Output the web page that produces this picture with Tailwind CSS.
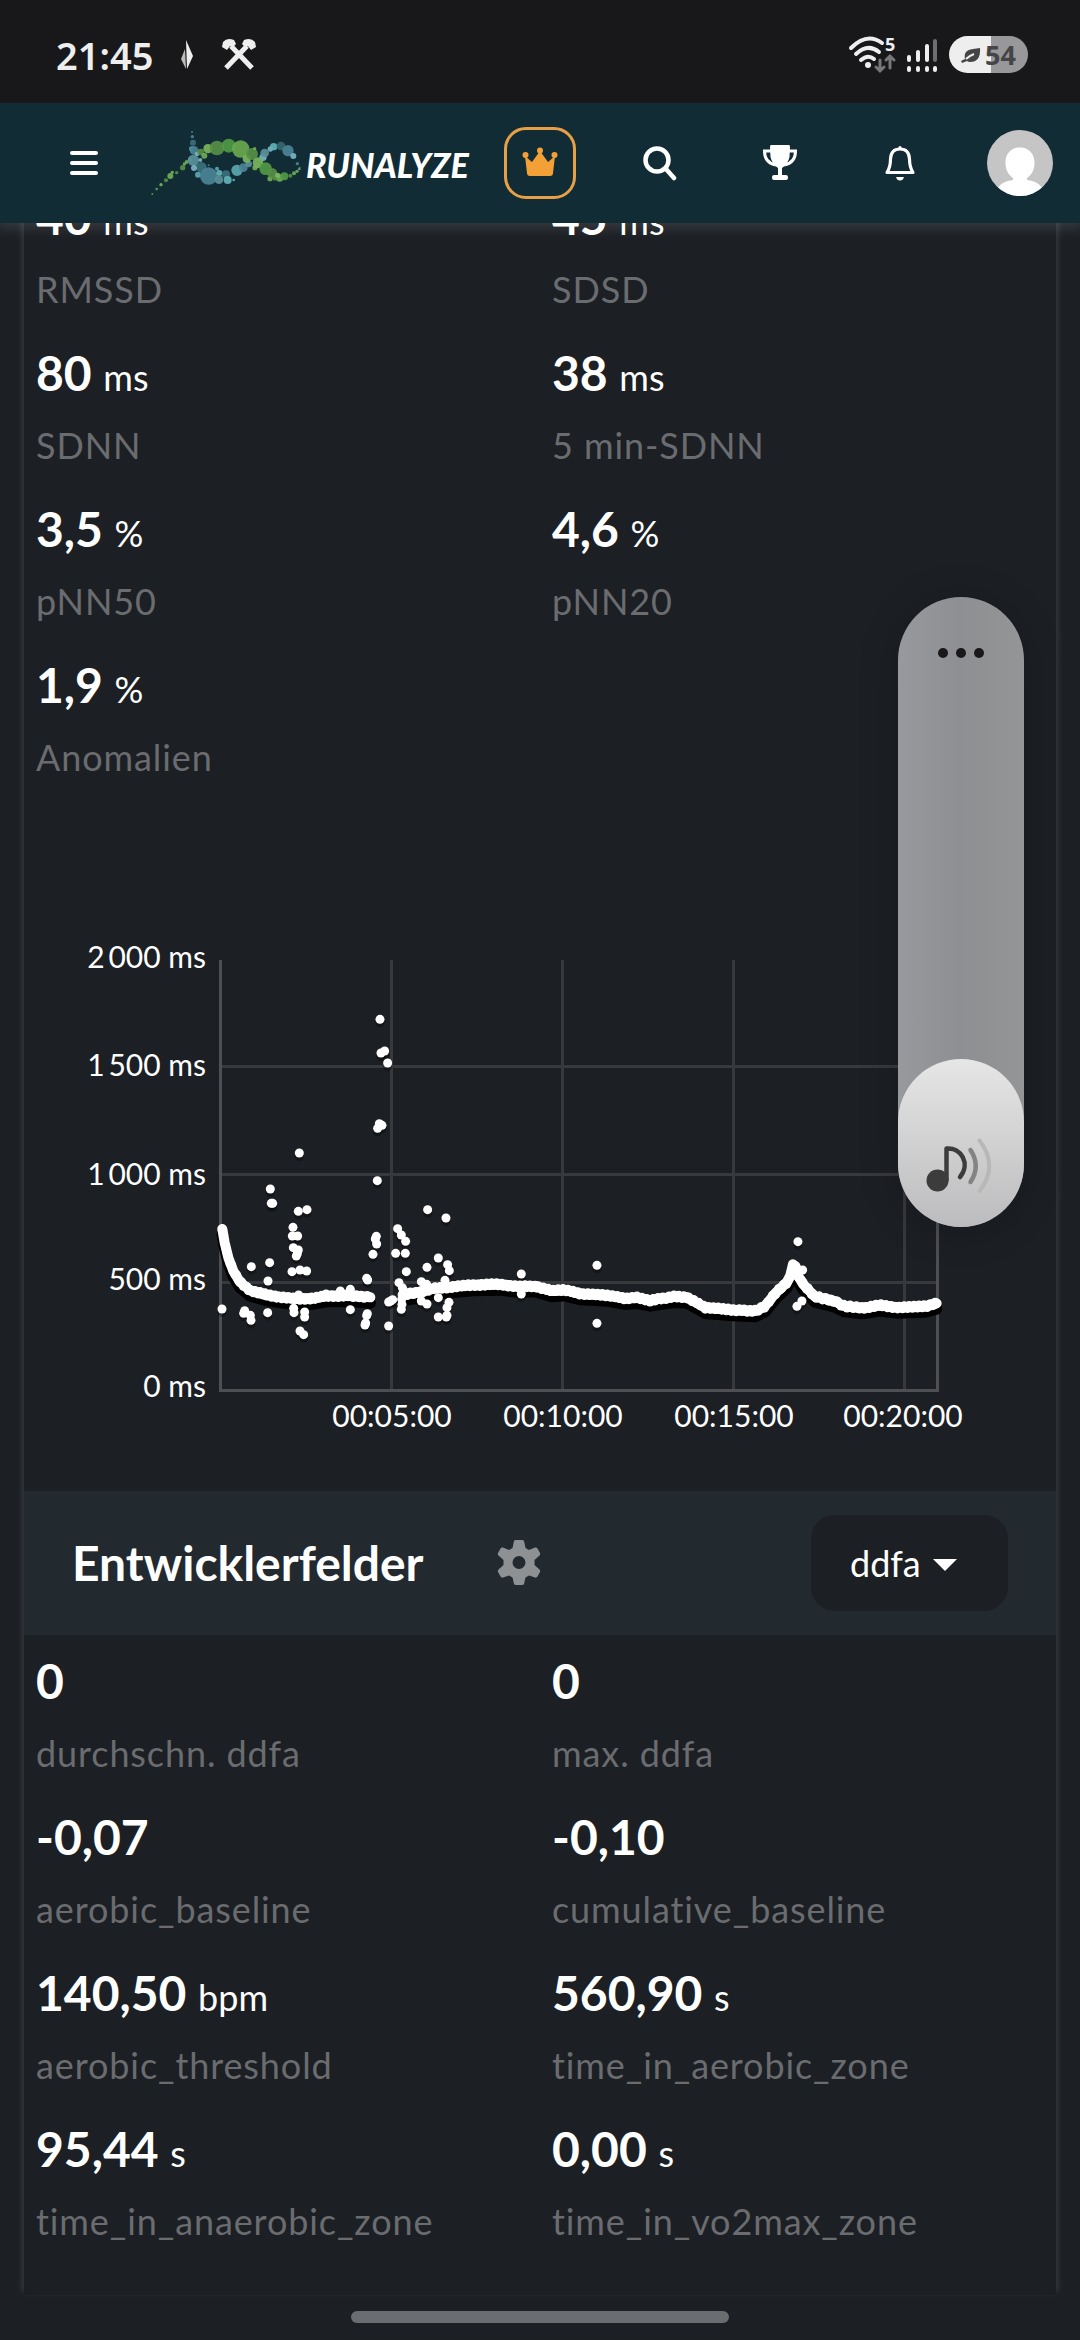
<html lang="de">
 <head>
  <meta charset="utf-8"/>
  <meta content="width=device-width, initial-scale=1.0" name="viewport"/>
  <title>
   RUNALYZE
  </title>
  <script src="https://cdn.jsdelivr.net/npm/@tailwindcss/browser@4"></script>
 </head>
 <body class="bg-[#1c1f24] text-white font-['Lato',sans-serif] overflow-x-hidden">
  <!-- status bar -->
  <div class="relative z-20 h-[103px] bg-[#18181a] flex items-center justify-between pl-14 pr-[52px] pt-[6px]">
   <div class="flex items-center gap-[26px] text-[#eee]">
    <span class="font-['Noto_Sans',sans-serif] font-semibold text-[38px] leading-none">21:45</span>
    <svg class="w-4 h-8" viewBox="0 0 16 32">
     <path d="M7 1 L14 17 L8 30 Z" fill="#eee"/>
     <path d="M6 10 L7 30 L2 20 Z" fill="#bbb"/>
    </svg>
    <svg class="w-9 h-9" viewBox="0 0 36 36" fill="none" stroke="#eee" stroke-width="5">
     <path d="M5 31 L26 9 M31 31 L10 9"/>
     <path d="M1 10 L2 5 Q6 0 13 3 L15 7 L12 10 L9 9 L6 13 Z M35 10 L34 5 Q30 0 23 3 L21 7 L24 10 L27 9 L30 13 Z" fill="#eee" stroke="none"/>
    </svg>
   </div>
   <div class="flex items-center gap-[11px]">
    <svg class="w-[48px] h-[38px] overflow-visible" viewBox="0 0 48 38" fill="none" stroke="#eee" stroke-width="4" stroke-linecap="round">
     <path d="M3 12 Q19 -4 34 7 M8 18 Q20 7 31 16 M13 24 Q20 18 26 23"/>
     <circle cx="20" cy="29" r="3" fill="#eee" stroke="none"/>
     <path d="M32 24 V34 M28 31 L32 35 L36 31 M42 32 V21 M38 24 L42 20 L46 24" stroke="#77777a" stroke-width="3"/>
     <text x="37" y="15" fill="#eee" stroke="none" class="font-['Noto_Sans',sans-serif] font-bold text-[18px]">5</text>
    </svg>
    <svg class="w-[31px] h-[36px]" viewBox="0 0 31 36" stroke="#eee" stroke-width="4" stroke-linecap="round">
     <path d="M2 20 V23 M11 15 V23 M20 9 V23 M2 31 V33 M11 31 V33 M20 31 V33 M28 31 V33"/>
     <path d="M28 4 V23" stroke="#6e6e70"/>
    </svg>
    <div class="w-[79px] h-[37px] rounded-full bg-linear-to-r from-[#eee] from-53% to-[#98989b] to-53% flex items-center justify-center text-[#454547]">
     <svg class="w-5 h-5" viewBox="0 0 20 20">
      <path d="M19 3 Q20 17 9 17 Q7 17 6 16 L1 18 L0 16 L4 14 Q2 5 12 4 Z" fill="#454547"/>
      <path d="M5 14 Q8 11 13 9" stroke="#eee" stroke-width="2" fill="none"/>
     </svg>
     <span class="font-['Noto_Sans',sans-serif] font-bold text-[27px] leading-none ml-1">54</span>
    </div>
   </div>
  </div>
  <!-- navigation -->
  <header class="relative z-10 h-[120px] bg-[#122c35] grid grid-cols-9 items-center shadow-[0_0_14px_4px_rgba(255,255,255,0.14)]">
   <button class="pl-12 flex justify-center" aria-label="Menü">
    <svg class="w-[30px] h-[30px]" viewBox="0 0 30 30" stroke="#fff" stroke-width="4" stroke-linecap="round">
     <path d="M3 5 H27 M3 15 H27 M3 25 H27"/>
    </svg>
   </button>
   <a href="#" class="col-span-3 pl-[30px] flex items-center gap-[2px]">
    <svg id="logo" class="w-[154px] h-[70px] shrink-0" viewBox="60 55 462 210"></svg>
    <span class="font-black italic text-[34px] leading-none pt-1">RUNALYZE</span>
   </a>
   <button class="size-[72px] border-3 border-[#e5a048] rounded-[22px] justify-self-center flex items-center justify-center" aria-label="Premium">
    <svg class="w-9 h-9" viewBox="0 0 36 36" fill="#f3a036">
     <path d="M3 11 L10 17 L18 6 L26 17 L33 11 L31 28 Q31 31 28 31 H8 Q5 31 5 28 Z"/>
     <circle cx="3.500" cy="10" r="3"/>
     <circle cx="18" cy="5.500" r="3"/>
     <circle cx="32.500" cy="10" r="3"/>
    </svg>
   </button>
   <button class="flex justify-center" aria-label="Suche">
    <svg class="w-9 h-9" viewBox="0 0 36 36" fill="none" stroke="#fff" stroke-width="4.500" stroke-linecap="round">
     <circle cx="15" cy="15" r="11.500"/>
     <path d="M24 24 L32 33"/>
    </svg>
   </button>
   <button class="flex justify-center" aria-label="Erfolge">
    <svg class="w-9 h-9" viewBox="0 0 36 36">
     <path d="M9 0 H27 Q28 0 28 2 L27.500 12 Q26 19 20 23 V30 H24 Q26 30 26 33 Q26 35 24 35 H12 Q10 35 10 33 Q10 30 12 30 H16 V23 Q10 19 8.500 12 L8 2 Q8 0 9 0 Z" fill="#fff"/>
     <path d="M9 6 H2.500 Q2.500 18 14 20 M27 6 H33.500 Q33.500 18 22 20" fill="none" stroke="#fff" stroke-width="3"/>
    </svg>
   </button>
   <button class="flex justify-center" aria-label="Benachrichtigungen">
    <svg class="w-9 h-9" viewBox="0 0 36 36" fill="none" stroke="#fff" stroke-width="3.200" stroke-linejoin="round" stroke-linecap="round">
     <path d="M18 4 Q9 4 8.500 14 Q8.500 22 5 27.500 H31 Q27.500 22 27.500 14 Q27 4 18 4 Z M18 2.500 V4"/>
     <path d="M14 32 H22 Q21 35.500 18 35.500 Q15 35.500 14 32 Z" fill="#fff" stroke="none"/>
    </svg>
   </button>
   <button class="flex justify-center" aria-label="Profil">
    <svg class="size-[66px]" viewBox="0 0 66 66">
     <clipPath id="round">
      <circle cx="33" cy="33" r="33"/>
     </clipPath>
     <g clip-path="url(#round)">
      <rect width="66" height="66" fill="#c5c5c5"/>
      <path d="M33 17.500 C42 17.500 48 24 47.500 34 C47 42 43 46 40 48 V50 C47 51 53 53 56 60 V66 H10 V60 C13 53 19 51 26 50 V48 C23 46 19 42 18.500 34 C18 24 24 17.500 33 17.500 Z" fill="#fff"/>
     </g>
    </svg>
   </button>
  </header>
  <main class="-mt-[44px] mx-6 shadow-[-5px_0_6px_-3px_rgba(255,255,255,0.12),5px_0_6px_-3px_rgba(255,255,255,0.12)] pb-7">
   <dl class="grid grid-cols-2" id="hrv"></dl>
   <svg class="w-full block" viewBox="24 802 1032 688">
    <g stroke="#37393d" stroke-width="3">
     <path d="M220 1065.500 H938 M220 1173.500 H938 M220 1281.500 H938 M391.500 959 V1389 M562.500 959 V1389 M733.500 959 V1389 M904.500 959 V1389"/>
     <path d="M220.500 959 V1389.500 H937.500 V959" fill="none" stroke="#4d4f53"/>
    </g>
    <g id="plot" transform="translate(200 1120) scale(0.3333)"></g>
    <g class="text-[30px]" fill="#fff" text-anchor="end">
     <text x="206" y="967">2&#8201;000 ms</text>
     <text x="206" y="1075">1&#8201;500 ms</text>
     <text x="206" y="1184">1&#8201;000 ms</text>
     <text x="206" y="1289">500 ms</text>
     <text x="206" y="1396">0 ms</text>
    </g>
    <g class="text-[30px]" fill="#fff" text-anchor="middle">
     <text x="392" y="1426">00:05:00</text>
     <text x="563" y="1426">00:10:00</text>
     <text x="734" y="1426">00:15:00</text>
     <text x="903" y="1426">00:20:00</text>
    </g>
   </svg>
   <div class="h-36 bg-[#22292f] flex items-center px-12 mb-2">
    <h2 class="font-bold text-[48px] leading-none">
     Entwicklerfelder
    </h2>
    <button class="ml-[72px]" aria-label="Einstellungen">
     <svg class="w-[46px] h-[46px]" viewBox="0 0 46 46" fill="#8d9194">
      <path fill-rule="evenodd" d="M18 1 Q18.500 0 20 0 H26 Q27.500 0 28 1 L29.500 8 L33 10 L39 7.500 Q40.500 7 41.500 8.500 L44 13 Q44.500 14.500 43.500 15.500 L38.500 20 V25 L43.500 29.500 Q44.500 30.500 44 32 L41.500 36.500 Q40.500 38 39 37.500 L33 35.500 L29.500 37.500 L28 44 Q27.500 45 26 45 H20 Q18.500 45 18 44 L16.500 37.500 L13 35.500 L7 37.500 Q5.500 38 4.500 36.500 L2 32 Q1.500 30.500 2.500 29.500 L7.500 25 V20 L2.500 15.500 Q1.500 14.500 2 13 L4.500 8.500 Q5.500 7 7 7.500 L13 10 L16.500 8 Z M23 16 A6.500 6.500 0 1 0 23 29 A6.500 6.500 0 1 0 23 16 Z"/>
     </svg>
    </button>
    <label class="relative ml-auto" for="field">
     <select id="field" class="appearance-none w-[197px] h-24 rounded-3xl bg-[#1c1f24] pl-[39px] text-[36px]">
      <option>ddfa</option>
     </select>
     <svg class="absolute right-[51px] top-11 w-[24px] h-[12px] pointer-events-none" viewBox="0 0 24 12" aria-hidden="true">
      <path d="M0 0 H24 L12 12 Z" fill="#fff"/>
     </svg>
    </label>
   </div>
   <dl class="grid grid-cols-2" id="fields"></dl>
  </main>
  <div class="h-[45px] flex justify-center pt-4">
   <div class="w-[378px] h-3 rounded-full bg-[#6b6e70]"></div>
  </div>
  <!-- volume overlay -->
  <div class="absolute right-14 top-[597px] w-[126px] h-[630px] rounded-full z-20 bg-linear-to-r from-[#98999c] via-[#8e8f92] to-[#949596] shadow-[0_4px_40px_rgba(0,0,0,0.2)]">
   <div class="absolute bottom-0 w-full h-[168px] rounded-full bg-linear-to-b from-[#e6e6e6] to-[#bcbcbe] flex justify-center pt-[77px]">
    <svg class="w-20 h-16" viewBox="920 1136 80 64" fill="none" stroke-linecap="round">
     <circle cx="936.500" cy="1180.500" r="11" fill="#3c3c3c"/>
     <path d="M945.500 1180 V1148.500 C960 1147 970 1164 959 1177" stroke="#3c3c3c" stroke-width="4.500" stroke-linejoin="round"/>
     <path d="M969.500 1150 Q980 1166 969.500 1182" stroke="#838383" stroke-width="4.500"/>
     <path d="M978.500 1140.500 Q998 1166 978.500 1191" stroke="#b8b8b8" stroke-width="4"/>
    </svg>
   </div>
   <input type="range" min="0" max="100" value="18" aria-label="Lautstärke" class="absolute inset-0 w-full h-full opacity-0"/>
   <button class="absolute top-12 inset-x-0 flex justify-center gap-2 py-[3px]" aria-label="Mehr">
    <span class="size-[10px] rounded-full bg-[#18181a]"></span>
    <span class="size-[10px] rounded-full bg-[#18181a]"></span>
    <span class="size-[10px] rounded-full bg-[#18181a]"></span>
   </button>
  </div>
  <script>
   const hrv = [
            ['40', 'ms', 'RMSSD'], ['45', 'ms', 'SDSD'],
            ['80', 'ms', 'SDNN'], ['38', 'ms', '5 min-SDNN'],
            ['3,5', '%', 'pNN50'], ['4,6', '%', 'pNN20'],
            ['1,9', '%', 'Anomalien']
        ];
        const fields = [
            ['0', '', 'durchschn. ddfa'], ['0', '', 'max. ddfa'],
            ['-0,07', '', 'aerobic_baseline'], ['-0,10', '', 'cumulative_baseline'],
            ['140,50', 'bpm', 'aerobic_threshold'], ['560,90', 's', 'time_in_aerobic_zone'],
            ['95,44', 's', 'time_in_anaerobic_zone'], ['0,00', 's', 'time_in_vo2max_zone']
        ];

        function renderStats(id, stats) {
            document.getElementById(id).innerHTML = stats.map(([value, unit, label]) => `
                <div class="px-3 pb-3 flex flex-col-reverse">
                    <dt class="text-[36px] leading-[68px] tracking-wide text-[#6a6c6f]">${label}</dt>
                    <dd class="text-[48px] leading-[76px] font-bold">${value} <span class="text-[36px] leading-none font-normal">${unit}</span></dd>
                </div>
            `).join('');
        }

        renderStats('hrv', hrv);
        renderStats('fields', fields);

        // R-R intervals: two continuous runs and the outliers around them
        const runs = [
            [[67,324],[74,365],[85,410],[100,450],[120,483],[150,508],[200,522],[240,528],[290,534],[340,532],[380,525],[450,524],[511,529]],
            [[608,521],[650,515],[700,503],[760,497],[820,492],[900,490],[955,497],[1005,495],[1055,510],[1094,507],[1144,519],[1222,523],[1277,533],[1311,530],[1350,538],[1422,527],[1461,529],[1516,560],[1599,567],[1666,570],[1694,557],[1727,516],[1760,485],[1771,464],[1779,430],[1788,440],[1794,464],[1810,490],[1844,526],[1905,541],[1932,555],[1988,561],[2038,553],[2088,559],[2177,556],[2210,547]]
        ];
        const outliers = [[298,96],[211,204],[214,247],[218,247],[295,271],[321,266],[279,319],[277,345],[293,345],[280,380],[295,387],[289,405],[292,398],[276,452],[300,447],[320,450],[209,425],[154,437],[204,480],[66,564],[134,569],[131,577],[151,583],[153,598],[203,575],[282,575],[281,562],[314,573],[314,588],[300,630],[311,641],[451,566],[502,578],[500,584],[497,606],[495,612],[566,615],[566,543],[578,536],[572,540],[532,179],[533,22],[538,8],[546,13],[529,346],[526,354],[530,369],[519,400],[500,472],[503,477],[593,323],[604,342],[617,361],[587,397],[616,397],[619,452],[683,266],[738,291],[715,411],[681,439],[743,431],[748,449],[597,485],[607,500],[612,510],[604,565],[606,550],[605,535],[664,482],[680,490],[664,540],[681,549],[735,478],[735,490],[715,530],[747,544],[741,560],[741,583],[739,588],[715,588],[451,505],[421,510],[378,519],[296,522],[964,459],[964,519],[1191,433],[1191,607],[1794,362],[1808,447],[1791,556],[1806,540],[540,-305],[543,-204],[554,-210],[563,-174]];

        let plot = '';
        runs.forEach(run => {
            plot += `<polyline points="${run.map(([x, y]) => `${x},${y + 17}`).join(' ')}" fill="none" stroke="#000" stroke-width="34" stroke-linecap="round" stroke-linejoin="round"/>`;
        });
        outliers.forEach(([x, y]) => {
            plot += `<circle cx="${x}" cy="${y + 10}" r="14" fill="#000" opacity="0.3"/>`;
        });
        runs.forEach(run => {
            plot += `<polyline points="${run.join(' ')}" fill="none" stroke="#fff" stroke-width="30" stroke-linecap="round" stroke-linejoin="round"/>`;
            for (let i = 1; i < run.length; i++) {
                const [x0, y0] = run[i - 1];
                const [x1, y1] = run[i];
                const steps = Math.ceil((x1 - x0) / 5);
                for (let s = 0; s < steps; s++) {
                    const x = x0 + (x1 - x0) * s / steps;
                    const y = y0 + (y1 - y0) * s / steps + Math.sin(x * 1.7) * 5;
                    plot += `<circle cx="${x}" cy="${y}" r="13.5" fill="#fff"/>`;
                }
            }
        });
        outliers.forEach(([x, y]) => {
            plot += `<circle cx="${x}" cy="${y}" r="13.5" fill="#fff"/>`;
        });
        document.getElementById('plot').innerHTML = plot;

        // logo bubbles: x, y, radius, colour
        const bubbles = [
            [186,67,3,'#4a8396'],[187,81,5,'#4a8396'],[189,99,9,'#3b7079'],[184,117,7,'#5aa7b0'],[192,122,13,'#4a8396'],[201,133,7,'#79b4c4'],
            [67,253,3,'#5a9f4a'],[80,238,4,'#5a9f4a'],[93,225,5,'#7ab55c'],[108,212,6,'#578f45'],[121,199,9,'#6fae55'],[127,188,5,'#6fae55'],[140,189,5,'#578f45'],[158,174,8,'#578f45'],[163,163,5,'#6fae55'],[170,157,6,'#6fae55'],[180,150,6,'#6fae55'],
            [190,152,17,'#5a919b'],[214,173,16,'#3b7079'],[192,175,9,'#79b4c4'],[204,195,9,'#5aa7b0'],[236,199,26,'#4a8396'],[211,151,6,'#79b4c4'],[236,167,3,'#4a8396'],[261,177,6,'#5aa7b0'],[268,190,9,'#5fb3b8'],[267,210,13,'#5a919b'],[288,194,12,'#3b7079'],[293,211,12,'#5fb3b8'],[311,211,4,'#5fb3b8'],[321,182,17,'#5aa7b0'],[340,174,13,'#4a8396'],[356,163,10,'#5a919b'],
            [212,127,10,'#578f45'],[223,138,9,'#6fae55'],[234,117,14,'#7ab55c'],[261,115,22,'#578f45'],[296,108,21,'#4f9a45'],[332,118,26,'#6aa84f'],[350,147,12,'#7ab55c'],[366,133,18,'#578f45'],[374,117,5,'#6fae55'],[375,174,8,'#6fae55'],
            [399,143,11,'#79b4c4'],[404,130,13,'#5a919b'],[421,118,8,'#79b4c4'],[431,111,11,'#5fb3b8'],[453,109,13,'#35686f'],[474,123,17,'#4a8396'],[490,139,9,'#79b4c4'],[502,162,5,'#4a8396'],[508,178,4,'#5aa7b0'],
            [384,159,16,'#7ab55c'],[407,177,19,'#4f9a45'],[420,207,8,'#6fae55'],[427,191,15,'#578f45'],[449,205,11,'#6fae55'],[435,206,7,'#578f45'],[443,197,8,'#7ab55c'],[463,200,12,'#4f9a45'],[481,198,6,'#578f45'],[492,191,6,'#6fae55'],[501,185,5,'#6fae55'],[509,174,3,'#578f45']
        ];
        document.getElementById('logo').innerHTML = bubbles.map(([x, y, r, fill]) => `<circle cx="${x}" cy="${y}" r="${r}" fill="${fill}" opacity="0.92"/>`).join('');
  </script>
 </body>
</html>
